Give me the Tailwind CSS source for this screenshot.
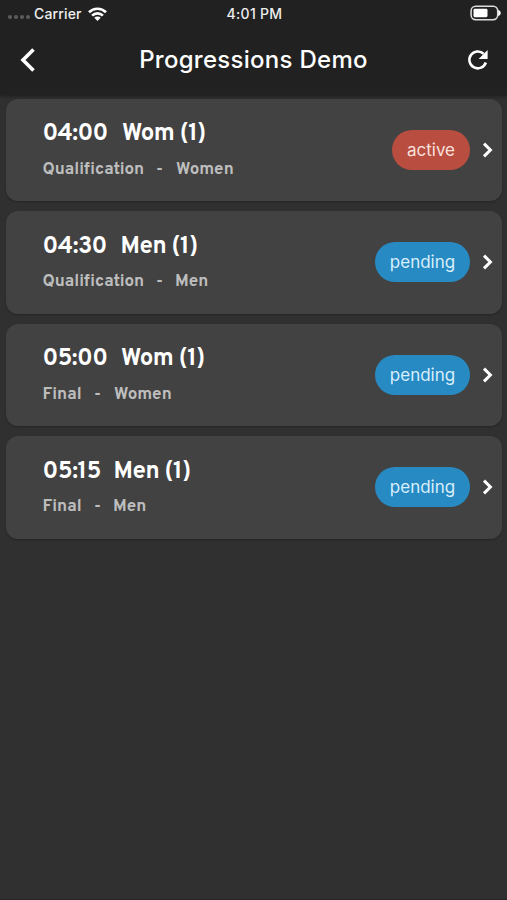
<!DOCTYPE html>
<html lang="en">
<head>
<meta charset="utf-8">
<title>Progressions Demo</title>
<script src="https://cdn.jsdelivr.net/npm/@tailwindcss/browser@4"></script>
</head>
<body class="h-[900px] w-[507px] overflow-hidden border-b border-[#2a2226] bg-[#303030] font-['Inter',sans-serif] text-white">
<header class="h-[95px] bg-[#212121] shadow-[0_1px_4px_rgba(0,0,0,0.45)]">
  <div class="grid h-[27px] grid-cols-3 items-center pr-[6px] pl-[8px] text-[14px] font-medium text-[#eeeeee]">
    <div class="flex items-center">
      <div class="mt-[7px] flex gap-[2px]">
        <i class="size-[4px] rounded-full bg-[#5c5c5c]"></i><i class="size-[4px] rounded-full bg-[#5c5c5c]"></i><i class="size-[4px] rounded-full bg-[#5c5c5c]"></i><i class="size-[4px] rounded-full bg-[#5c5c5c]"></i>
      </div>
      <span class="ml-[4px] w-[49px] tracking-[0.15px]">Carrier</span>
      <svg class="ml-[5px] h-[14px] w-[19px]" viewBox="0 0 19 14" fill="none" stroke="#fff" stroke-width="2.7"><path d="M1 5.2a12.2 12.2 0 0 1 17 0M4.1 8.6a7.7 7.7 0 0 1 10.8 0"/><path d="M6.3 10.8a4.5 4.5 0 0 1 6.4 0L9.5 14z" fill="#fff" stroke="none"/></svg>
    </div>
    <span class="text-center tracking-[0.3px]">4:01 PM</span>
    <svg class="mt-[-1px] h-[16px] w-[31px] justify-self-end" viewBox="0 0 31 16"><rect x="1.1" y="1.3" width="26.6" height="13.4" rx="4.6" fill="none" stroke="#ddd" stroke-width="1.5"/><rect x="3.5" y="3.8" width="14" height="8.4" rx="1.4" fill="#fff"/><path d="M28.2 4.8c3.4 1.5 3.4 4.9 0 6.4z" fill="#fff"/></svg>
  </div>
  <div class="flex h-[66px] items-center justify-between pr-[17px] pl-[19px]">
    <svg class="h-[26px] w-[18px]" viewBox="0 0 18 26" fill="none" stroke="#fff" stroke-width="3.6"><path d="M14.5 2.5L4 13l10.5 10.5"/></svg>
    <h1 class="ml-[4px] text-[24px] font-medium tracking-[0.28px]">Progressions Demo</h1>
    <svg class="size-[24px]" viewBox="0 0 24 24" fill="none" stroke="#fff" stroke-width="2.6"><path d="M19.8 14.5A8.4 8.4 0 1 1 17.6 5.8"/><path d="M21.6 2v9h-9z" fill="#fff" stroke="none"/></svg>
  </div>
</header>
<main class="flex flex-col gap-[10px] pt-[3.5px] pr-[5px] pl-[6px] font-['Overpass','Roboto',sans-serif]">
  <section class="flex h-[102.5px] items-center rounded-[12px] bg-[#424242] pr-[7px] pl-[36.5px] shadow-[0_1px_2px_rgba(0,0,0,0.25)]">
    <div class="grow pt-[2px]">
      <h2 class="flex h-[30px] items-center text-[24px] font-bold"><span class="w-[79.5px] tracking-[-0.7px]">04:00</span><span class="tracking-[-0.5px]">Wom (1)</span></h2>
      <p class="mt-[9px] flex h-[24px] items-center text-[17px] font-bold tracking-[0px] text-[#bdbdbd]"><span class="w-[113.5px]">Qualification</span><span class="w-[20px]">-</span><span>Women</span></p>
    </div>
    <span class="flex h-[40px] w-[78px] items-center justify-center rounded-full bg-[#b84d40] pt-[1px] font-['Inter'] text-[17px] text-[#fae0dc]">active</span>
    <svg class="ml-[11px] h-[18px] w-[14px]" viewBox="0 0 14 18" fill="none" stroke="#fff" stroke-width="3"><path d="M3 2.6L9.4 9 3 15.4"/></svg>
  </section>
  <section class="flex h-[102.5px] items-center rounded-[12px] bg-[#424242] pr-[7px] pl-[36.5px] shadow-[0_1px_2px_rgba(0,0,0,0.25)]">
    <div class="grow pt-[2px]">
      <h2 class="flex h-[30px] items-center text-[24px] font-bold"><span class="w-[78px] tracking-[-0.5px]">04:30</span><span class="tracking-[-0.5px]">Men (1)</span></h2>
      <p class="mt-[9px] flex h-[24px] items-center text-[17px] font-bold tracking-[0px] text-[#bdbdbd]"><span class="w-[113.5px]">Qualification</span><span class="w-[19px]">-</span><span>Men</span></p>
    </div>
    <span class="flex h-[40px] w-[95px] items-center justify-center rounded-full bg-[#278ac3] pt-[1px] font-['Inter'] text-[17px] text-[#d8effc]">pending</span>
    <svg class="ml-[11px] h-[18px] w-[14px]" viewBox="0 0 14 18" fill="none" stroke="#fff" stroke-width="3"><path d="M3 2.6L9.4 9 3 15.4"/></svg>
  </section>
  <section class="flex h-[102.5px] items-center rounded-[12px] bg-[#424242] pr-[7px] pl-[36.5px] shadow-[0_1px_2px_rgba(0,0,0,0.25)]">
    <div class="grow pt-[2px]">
      <h2 class="flex h-[30px] items-center text-[24px] font-bold"><span class="w-[78.5px] tracking-[-0.6px]">05:00</span><span class="tracking-[-0.5px]">Wom (1)</span></h2>
      <p class="mt-[9px] flex h-[24px] items-center text-[17px] font-bold tracking-[0px] text-[#bdbdbd]"><span class="w-[51.5px]">Final</span><span class="w-[20px]">-</span><span>Women</span></p>
    </div>
    <span class="flex h-[40px] w-[95px] items-center justify-center rounded-full bg-[#278ac3] pt-[1px] font-['Inter'] text-[17px] text-[#d8effc]">pending</span>
    <svg class="ml-[11px] h-[18px] w-[14px]" viewBox="0 0 14 18" fill="none" stroke="#fff" stroke-width="3"><path d="M3 2.6L9.4 9 3 15.4"/></svg>
  </section>
  <section class="flex h-[102.5px] items-center rounded-[12px] bg-[#424242] pr-[7px] pl-[36.5px] shadow-[0_1px_2px_rgba(0,0,0,0.25)]">
    <div class="grow pt-[2px]">
      <h2 class="flex h-[30px] items-center text-[24px] font-bold"><span class="w-[71px] tracking-[-0.4px]">05:15</span><span class="tracking-[-0.5px]">Men (1)</span></h2>
      <p class="mt-[9px] flex h-[24px] items-center text-[17px] font-bold tracking-[0px] text-[#bdbdbd]"><span class="w-[51.5px]">Final</span><span class="w-[19px]">-</span><span>Men</span></p>
    </div>
    <span class="flex h-[40px] w-[95px] items-center justify-center rounded-full bg-[#278ac3] pt-[1px] font-['Inter'] text-[17px] text-[#d8effc]">pending</span>
    <svg class="ml-[11px] h-[18px] w-[14px]" viewBox="0 0 14 18" fill="none" stroke="#fff" stroke-width="3"><path d="M3 2.6L9.4 9 3 15.4"/></svg>
  </section>
</main>
</body>
</html>
